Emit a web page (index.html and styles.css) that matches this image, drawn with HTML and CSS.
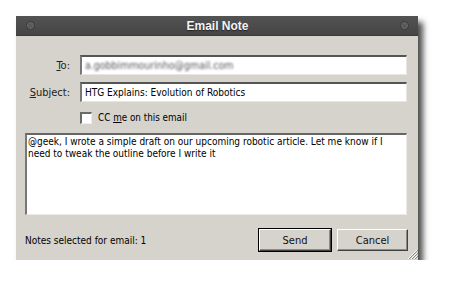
FILE: index.html
```html
<!DOCTYPE html>
<html lang="en">
<head>
    <meta charset="UTF-8">
    <title>Email Note</title>
    <link rel="stylesheet" href="styles.css">
</head>
<body>
    <div class="window">
        <div class="titlebar">
            <span class="dot"></span>
            <span class="title">Email Note</span>
            <span class="dot"></span>
        </div>
        <div class="content">
            <div class="form">
                <label class="label"><u>T</u>o:</label>
                <div class="field"><span class="blurred">a.gobbimmourinho@gmail.com</span></div>
                <label class="label"><u>S</u>ubject:</label>
                <div class="field">HTG Explains: Evolution of Robotics</div>
                <span></span>
                <div class="check-row">
                    <span class="checkbox"></span>
                    <span>CC <u>m</u>e on this email</span>
                </div>
            </div>
            <div class="message">@geek, I wrote a simple draft on our upcoming robotic article. Let me know if I need to tweak the outline before I write it</div>
            <div class="footer">
                <span class="status">Notes selected for email: 1</span>
                <button class="btn btn-default" type="button">Send</button>
                <button class="btn" type="button">Cancel</button>
            </div>
            <svg class="grip" width="12" height="12" viewBox="0 0 12 12">
                <path d="M11 2 L2 11 M11 5 L5 11 M11 8 L8 11" stroke="#fff" stroke-width="1"/>
                <path d="M12 2 L3 11 M12 5 L6 11 M12 8 L9 11" stroke="#8a8780" stroke-width="1"/>
            </svg>
        </div>
    </div>
</body>
</html>
```

FILE: styles.css
```css
body {
    margin: 0;
    background-color: #fff;
    font-family: "DejaVu Sans", sans-serif;
    font-stretch: condensed;
    font-size: 11px;
    color: #000;
}
.window {
    margin: 16px 0 0 16px;
    width: 402px;
    height: 244px;
    background-color: #d6d3cd;
    box-shadow: 5px 6px 6px rgba(0, 0, 0, 0.7);
    display: flex;
    flex-direction: column;
}
.titlebar {
    height: 19px;
    background: linear-gradient(#535353, #454545);
    border-bottom: 1px solid #3a3a3a;
    display: flex;
    align-items: center;
    justify-content: space-between;
    padding: 0 9px 0 10px;
}
.title {
    color: #f4f4f4;
    font-family: "Liberation Sans", Arial, sans-serif;
    font-weight: bold;
    font-size: 12px;
    text-shadow: 0 1px 1px #222;
}
.dot {
    width: 7px;
    height: 7px;
    border-radius: 50%;
    background: #595959;
    border: 1px solid #383838;
    box-shadow: inset 0 0 0 1px #6e6e6e;
}
.content {
    position: relative;
    flex: 1;
    padding: 19px 10px 0 9px;
    display: flex;
    flex-direction: column;
}
.form {
    display: grid;
    grid-template-columns: 45px 327px;
    column-gap: 10px;
    row-gap: 7px;
    align-items: center;
}
.label {
    text-align: right;
    font-size: 11px;
    color: #222;
}
.field {
    height: 17px;
    background: #fff;
    border-top: 2px solid #555;
    border-left: 2px solid #777;
    border-right: 1px solid #e8e6e2;
    border-bottom: 1px solid #e8e6e2;
    padding: 0 3px;
    line-height: 17px;
    font-size: 10px;
    white-space: nowrap;
    overflow: hidden;
}
.blurred {
    filter: blur(1.3px);
    color: #555;
    font-size: 10.5px;
}
.check-row {
    display: flex;
    align-items: center;
    gap: 6px;
    height: 13px;
    margin-top: 2px;
    font-size: 9.8px;
}
.checkbox {
    width: 9px;
    height: 9px;
    background: #fff;
    border-top: 2px solid #6a6a6a;
    border-left: 2px solid #6a6a6a;
    border-right: 1px solid #eee;
    border-bottom: 1px solid #eee;
}
.message {
    margin-top: 9px;
    height: 78px;
    width: 378px;
    background: #fff;
    border-top: 2px solid #666;
    border-left: 2px solid #777;
    border-right: 1px solid #eceae6;
    border-bottom: 1px solid #eceae6;
    padding: 1px 0 0 1px;
    font-size: 10px;
    line-height: 12px;
}
.footer {
    margin-top: 14px;
    display: flex;
    align-items: center;
    gap: 6px;
}
.status {
    flex: 1;
    font-size: 10px;
}
.btn {
    width: 71px;
    height: 22px;
    background: #d6d3cd;
    font-family: "DejaVu Sans", sans-serif;
    font-stretch: condensed;
    font-size: 11px;
    color: #111;
    border: 1px solid;
    border-color: #fff #404040 #404040 #fff;
    box-shadow: inset -1px -1px 0 #8d8a84;
    padding: 0;
}
.btn-default {
    width: 72px;
    outline: 1px solid #000;
    outline-offset: 0;
}
.grip {
    position: absolute;
    right: 0;
    bottom: 0;
}
```
